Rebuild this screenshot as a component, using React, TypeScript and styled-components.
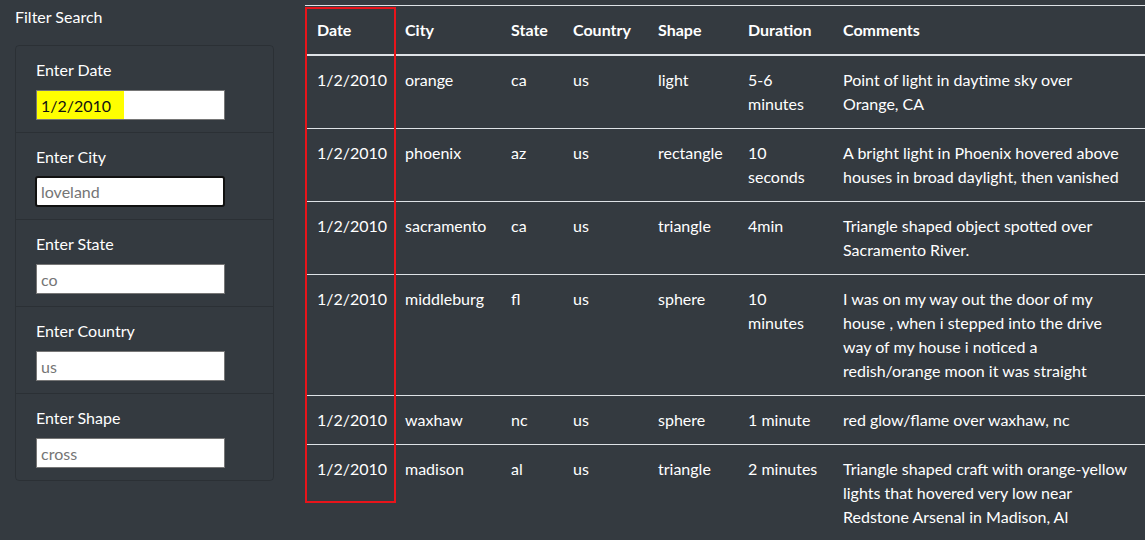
import React from 'react';
import styled, { createGlobalStyle } from 'styled-components';

const GlobalStyle = createGlobalStyle`
  body {
    margin: 0;
    background: #343a40;
    color: #fff;
    font-family: Lato, "Open Sans", "Liberation Sans", sans-serif;
    font-size: 16px;
    line-height: 24px;
    overflow: hidden;
  }
`;

const Page = styled.div`
  display: flex;
  align-items: flex-start;
  height: 540px;
`;

const Sidebar = styled.aside`
  width: 259px;
  padding: 5px 0 0 15px;
  flex-shrink: 0;
`;

const Title = styled.div`
  margin-bottom: 16px;
`;

const Card = styled.ul`
  list-style: none;
  margin: 0;
  padding: 0;
  border: 1px solid rgba(0, 0, 0, 0.16);
  border-radius: 4px;
`;

const Item = styled.li`
  padding: 12px 20px;
  & + & {
    border-top: 1px solid rgba(0, 0, 0, 0.16);
  }
`;

const Label = styled.label`
  display: block;
  margin-bottom: 8px;
`;

const Field = styled.input<{ $focused?: boolean; $highlight?: number }>`
  box-sizing: border-box;
  display: block;
  width: ${(p) => (p.$focused ? '190px' : '189px')};
  height: ${(p) => (p.$focused ? '31px' : '30px')};
  margin: ${(p) => (p.$focused ? '-1px 0 0 -1px' : '0')};
  padding: 0 4px;
  font: inherit;
  color: #111;
  border: ${(p) => (p.$focused ? '2px solid #111' : '1px solid #767676')};
  border-radius: ${(p) => (p.$focused ? '3px' : '0')};
  background: ${(p) =>
    p.$highlight
      ? `linear-gradient(to right, #ffff00 ${p.$highlight}px, #fff ${p.$highlight}px)`
      : '#fff'};
  outline: none;
  &::placeholder {
    color: #757575;
  }
`;

const Main = styled.main`
  position: relative;
  margin: 5px 0 0 31px;
  width: 840px;
  flex-shrink: 0;
`;

const Table = styled.table`
  width: 840px;
  table-layout: fixed;
  border-collapse: collapse;
  border-top: 1px solid #dee2e6;
`;

const Th = styled.th<{ $w: number }>`
  width: ${(p) => p.$w}px;
  box-sizing: border-box;
  padding: 12px;
  text-align: left;
  font-weight: 700;
  vertical-align: top;
  border-bottom: 2px solid #dee2e6;
`;

const Td = styled.td<{ $last?: boolean }>`
  padding: 12px ${(p) => (p.$last ? '16px' : '12px')} 12px 12px;
  vertical-align: top;
  border-top: 1px solid #dee2e6;
`;

const Marker = styled.div`
  position: absolute;
  top: 2px;
  left: 0;
  width: 91px;
  height: 496px;
  box-sizing: border-box;
  border: 2px solid #e8141a;
  pointer-events: none;
`;

const filters = [
  { label: 'Enter Date', value: '1/2/2010', highlight: 87 },
  { label: 'Enter City', placeholder: 'loveland', focused: true },
  { label: 'Enter State', placeholder: 'co' },
  { label: 'Enter Country', placeholder: 'us' },
  { label: 'Enter Shape', placeholder: 'cross' },
];

const columns: [string, number][] = [
  ['Date', 88],
  ['City', 106],
  ['State', 62],
  ['Country', 85],
  ['Shape', 90],
  ['Duration', 95],
  ['Comments', 314],
];

const rows = [
  ['1/2/2010', 'orange', 'ca', 'us', 'light', '5-6 minutes', 'Point of light in daytime sky over Orange, CA'],
  ['1/2/2010', 'phoenix', 'az', 'us', 'rectangle', '10 seconds', 'A bright light in Phoenix hovered above houses in broad daylight, then vanished'],
  ['1/2/2010', 'sacramento', 'ca', 'us', 'triangle', '4min', 'Triangle shaped object spotted over Sacramento River.'],
  ['1/2/2010', 'middleburg', 'fl', 'us', 'sphere', '10 minutes', 'I was on my way out the door of my house , when i stepped into the drive way of my house i noticed a redish/orange moon it was straight'],
  ['1/2/2010', 'waxhaw', 'nc', 'us', 'sphere', '1 minute', 'red glow/flame over waxhaw, nc'],
  ['1/2/2010', 'madison', 'al', 'us', 'triangle', '2 minutes', 'Triangle shaped craft with orange-yellow lights that hovered very low near Redstone Arsenal in Madison, Al'],
];

const App: React.FC = () => (
  <>
    <GlobalStyle />
    <Page>
      <Sidebar>
        <Title>Filter Search</Title>
        <Card>
          {filters.map((f) => (
            <Item key={f.label}>
              <Label>{f.label}</Label>
              <Field
                type="text"
                defaultValue={f.value}
                placeholder={f.placeholder}
                $focused={f.focused}
                $highlight={f.highlight}
              />
            </Item>
          ))}
        </Card>
      </Sidebar>
      <Main>
        <Table>
          <thead>
            <tr>
              {columns.map(([name, w]) => (
                <Th key={name} $w={w}>
                  {name}
                </Th>
              ))}
            </tr>
          </thead>
          <tbody>
            {rows.map((r, i) => (
              <tr key={i}>
                {r.map((cell, j) => (
                  <Td key={j} $last={j === r.length - 1}>
                    {cell}
                  </Td>
                ))}
              </tr>
            ))}
          </tbody>
        </Table>
        <Marker />
      </Main>
    </Page>
  </>
);

export default App;
